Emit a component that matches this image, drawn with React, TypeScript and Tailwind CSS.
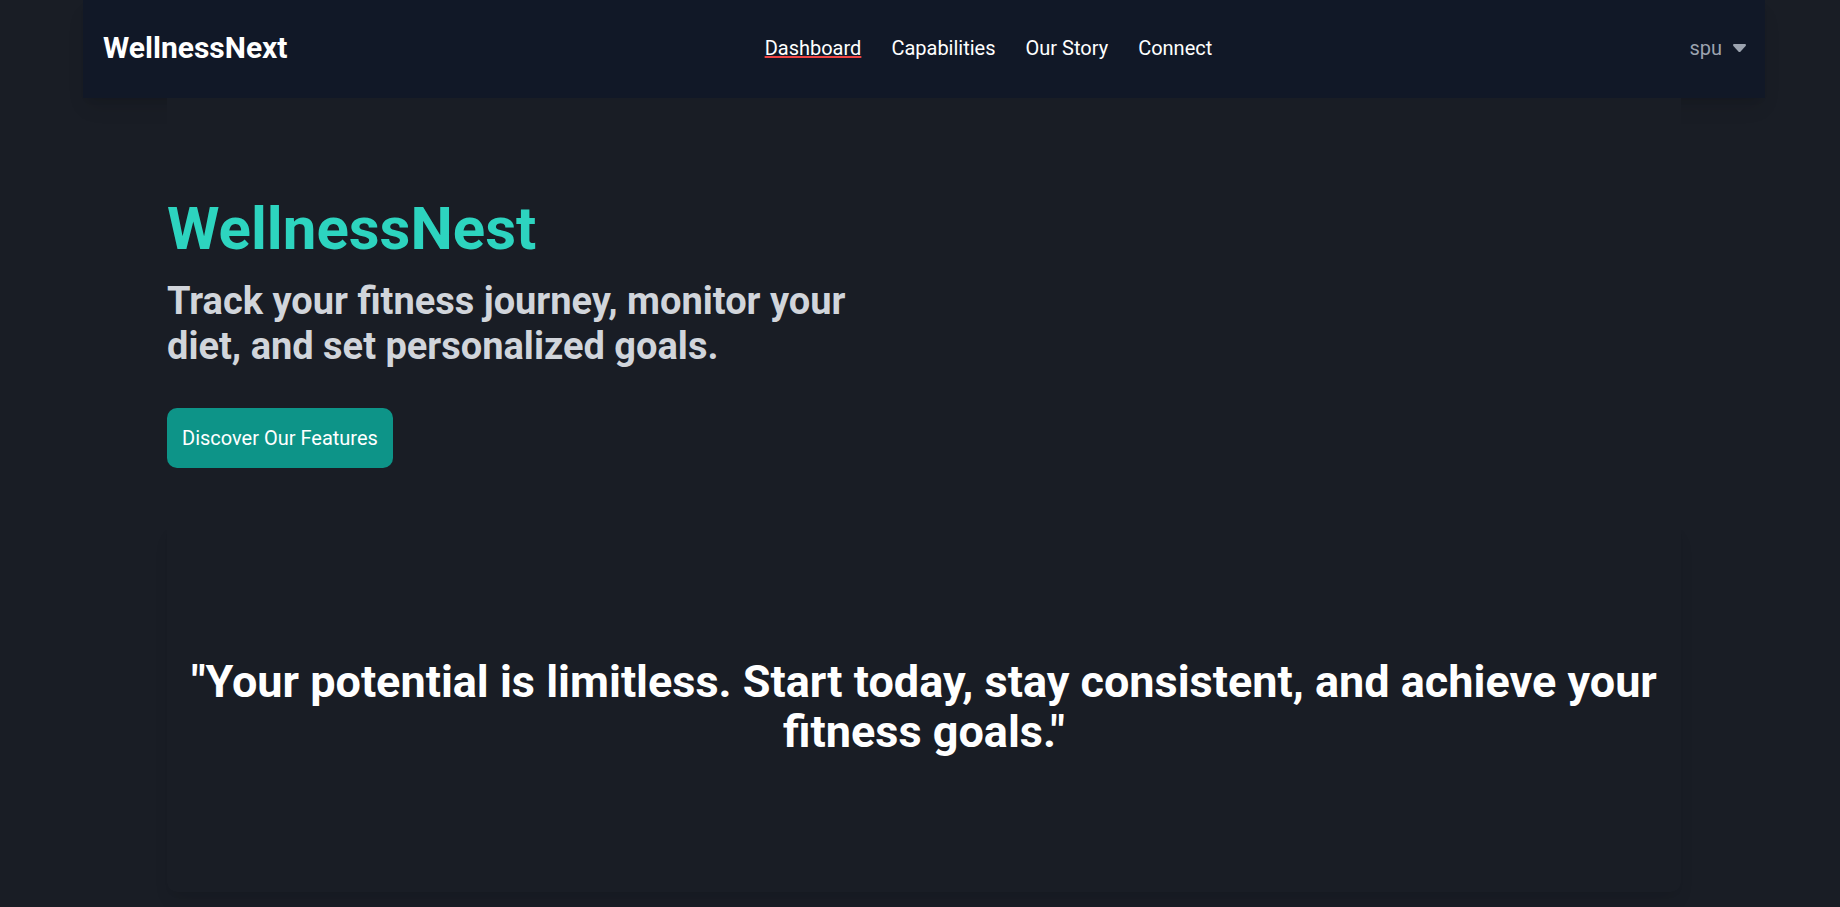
import React from "react";

const links = ["Dashboard", "Capabilities", "Our Story", "Connect"];

export default function App() {
  return (
    <div className="min-h-screen bg-[#191d25] pr-[75px] pl-[83px] font-['Roboto',sans-serif] text-white">
      <header className="flex h-[98px] items-center justify-between bg-[#111827] pr-[19px] pb-[2px] pl-5 shadow-[0_12px_19px_-4px_rgb(0_0_0/0.1),0_5px_8px_-5px_rgb(0_0_0/0.1)]">
        <a href="#" className="text-[30px] leading-10 font-bold">WellnessNext</a>
        <nav className="flex gap-[30px] text-[20px] leading-[30px]">
          {links.map((label, i) => (
            <a
              key={label}
              href="#"
              className={i === 0 ? "underline decoration-[#ef4444] decoration-2" : ""}
            >
              {label}
            </a>
          ))}
        </nav>
        <button className="flex items-center gap-[11px] text-[20px] leading-[30px] text-[#9ca3af]">
          spu
          <svg width="13" height="8" viewBox="0 0 13 8" fill="currentColor" aria-hidden="true">
            <path d="M1.2 0H11.8C12.9 0 13.3 1.2 12.6 2L7.6 7.4Q6.5 8.4 5.4 7.4L.4 2C-.3 1.2.1 0 1.2 0Z" />
          </svg>
        </button>
      </header>
      <main className="relative mx-[84px] bg-[#191d25] pt-[101px]">
        <section className="flex flex-col items-start">
          <h1 className="text-[60px] leading-[60px] font-bold text-[#2dd4bf]">WellnessNest</h1>
          <h2 className="mt-5 w-1/2 text-[38px] leading-[45px] font-bold text-[#d1d5db]">
            Track your fitness journey, monitor your diet, and set personalized goals.
          </h2>
          <a
            href="#"
            className="mt-[39px] rounded-[10px] bg-[#0d9488] px-[15px] py-[15px] text-[20px] leading-[30px]"
          >
            Discover Our Features
          </a>
        </section>
        <section className="mt-[54px] flex h-[370px] items-center justify-center rounded-[10px] px-5 shadow-[0_12px_19px_-4px_rgb(0_0_0/0.07),0_5px_8px_-5px_rgb(0_0_0/0.07)]">
          <p className="text-center text-[45px] leading-[50px] font-bold">
            "Your potential is limitless. Start today, stay consistent, and achieve your fitness goals."
          </p>
        </section>
      </main>
    </div>
  );
}
